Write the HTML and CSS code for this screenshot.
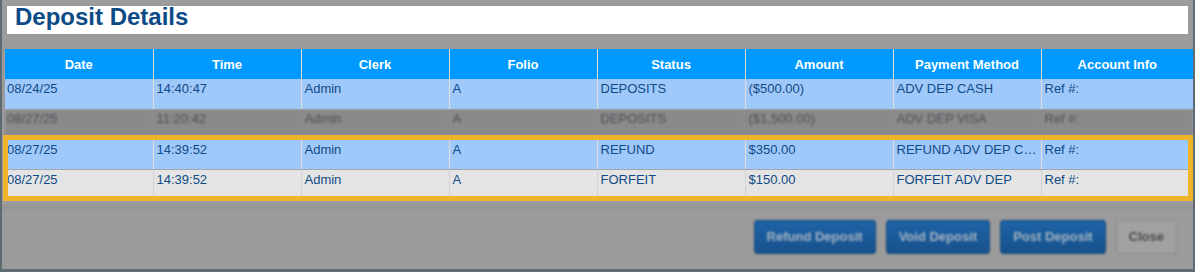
FILE: index.html
```html
<!DOCTYPE html>
<html>
<head>
<meta charset="utf-8">
<link rel="stylesheet" href="styles.css">
</head>
<body>
<div class="frame">
  <div class="title">Deposit Details</div>
  <table class="grid">
    <colgroup>
      <col class="c"><col class="c"><col class="c"><col class="c"><col class="c"><col class="c"><col class="c"><col>
    </colgroup>
    <thead>
      <tr><th>Date</th><th>Time</th><th>Clerk</th><th>Folio</th><th>Status</th><th>Amount</th><th>Payment Method</th><th>Account Info</th></tr>
    </thead>
    <tbody>
      <tr class="blue"><td>08/24/25</td><td>14:40:47</td><td>Admin</td><td>A</td><td>DEPOSITS</td><td>($500.00)</td><td>ADV DEP CASH</td><td>Ref #:</td></tr>
      <tr class="dim"><td>08/27/25</td><td>11:20:42</td><td>Admin</td><td>A</td><td>DEPOSITS</td><td>($1,500.00)</td><td>ADV DEP VISA</td><td>Ref #:</td></tr>
      <tr class="blue"><td>08/27/25</td><td>14:39:52</td><td>Admin</td><td>A</td><td>REFUND</td><td>$350.00</td><td>REFUND ADV DEP CASH</td><td>Ref #:</td></tr>
      <tr class="gray"><td>08/27/25</td><td>14:39:52</td><td>Admin</td><td>A</td><td>FORFEIT</td><td>$150.00</td><td>FORFEIT ADV DEP</td><td>Ref #:</td></tr>
    </tbody>
  </table>
  <div class="sep"></div>
  <div class="actions">
    <button class="btn primary">Refund Deposit</button>
    <button class="btn primary">Void Deposit</button>
    <button class="btn primary">Post Deposit</button>
    <button class="btn plain">Close</button>
  </div>
  <div class="spot"></div>
</div>
</body>
</html>
```
FILE: styles.css
```css
html, body {
  margin: 0;
  padding: 0;
  background: #9b9b9b;
}
.frame {
  position: relative;
  width: 1195px;
  height: 272px;
  box-sizing: border-box;
  background: #9b9b9b;
  border-left: 2px solid #5e6b73;
  border-right: 2px solid #5e6b73;
  border-bottom: 3px solid #5f6c74;
  font-family: "Liberation Sans", Arial, sans-serif;
  overflow: hidden;
}
.title {
  margin: 6px 5px 0 5px;
  background: #ffffff;
  padding: 0 0 6px 8px;
  font-size: 24px;
  line-height: 22px;
  font-weight: bold;
  color: #0c4a87;
}
.grid {
  margin: 15px 0 0 3px;
  width: 1188px;
  table-layout: fixed;
  border-collapse: collapse;
  font-size: 13px;
}
.grid col.c {
  width: 148px;
}
.grid th {
  height: 30px;
  padding: 0;
  background: #0099ff;
  color: #ffffff;
  font-weight: bold;
  text-align: center;
  vertical-align: middle;
  border-right: 1px solid #e4dcd2;
  box-sizing: border-box;
}
.grid th:last-child, .grid td:last-child {
  border-right: none;
}
.grid td {
  height: 30px;
  padding: 2px 2px 0 3px;
  vertical-align: top;
  line-height: 15px;
  color: #0f4b86;
  border-right: 1px solid #e6ded6;
  border-bottom: 1px solid #a3a7ad;
  white-space: nowrap;
  overflow: hidden;
  text-overflow: ellipsis;
  box-sizing: border-box;
}
.grid td:first-child {
  padding-left: 2px;
}
.grid tr.blue td {
  background: #9fc8fb;
}
.grid tr.gray td {
  background: #e4e4e4;
  border-right-color: #d2d2d2;
}
.grid tr.dim td {
  background: #8a8a8a;
  color: #4a4e55;
  padding-top: 1px;
  border-right-color: #7f7f7f;
  border-bottom-color: #8a8a8a;
  filter: blur(1px);
}
.sep {
  margin-top: 6px;
  height: 3px;
  background: #939393;
  filter: blur(1px);
}
.actions {
  display: flex;
  justify-content: flex-end;
  gap: 10px;
  padding: 11px 16px 0 0;
}
.btn {
  appearance: none;
  height: 34px;
  box-sizing: border-box;
  padding: 0 12px;
  font-family: "Liberation Sans", Arial, sans-serif;
  font-size: 13px;
  font-weight: bold;
  border-radius: 3px;
  filter: blur(0.9px);
}
.btn.primary {
  background: linear-gradient(#1e64a8, #16518c);
  border: 1px solid #154879;
  color: #a7b5c4;
}
.btn.plain {
  background: #a1a1a1;
  border: 1px solid #8a8a8a;
  color: #4c4c4c;
  padding: 0 12px;
}
.spot {
  position: absolute;
  left: 1px;
  top: 135px;
  width: 1190px;
  height: 66px;
  box-sizing: border-box;
  border: 5px solid #efb42a;
  pointer-events: none;
}
```
